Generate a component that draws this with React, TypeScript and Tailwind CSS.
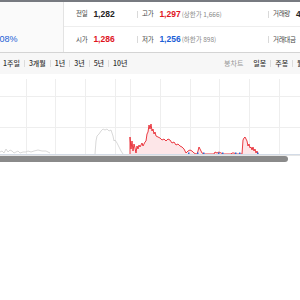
import React from 'react'

const KR = "font-['Noto_Sans_CJK_KR',sans-serif]"
const NUM = "font-['Liberation_Sans','Noto_Sans_CJK_KR',sans-serif]"

const grayLeft: [number, number][] = [
  [0, 151], [2, 150], [4, 152], [6, 148], [8, 151], [10, 149], [12, 150], [14, 152], [16, 151],
  [18, 150], [20, 152], [23, 151], [26, 151], [28, 150], [31, 151], [34, 150], [38, 149],
  [42, 150], [46, 150], [50, 152],
]

const grayMid: [number, number][] = [
  [95, 153], [96, 140], [97, 135], [99, 133], [101, 130], [103, 128], [105, 129], [107, 128],
  [109, 130], [111, 129], [113, 135], [114, 140], [115, 139], [117, 142], [119, 146], [121, 150], [123, 153],
]

const red: [number, number][] = [
  [130, 153], [130, 136], [131, 148], [132, 140], [133, 150], [134, 143], [135, 147], [136, 152],
  [137, 145], [138, 148], [139, 144], [140, 146], [142, 142], [143, 145], [145, 141], [146, 140],
  [147, 133], [148, 131], [149, 124], [150, 128], [151, 123], [152, 130], [153, 128], [154, 133],
  [155, 131], [156, 135], [158, 136], [160, 137], [162, 139], [164, 138], [166, 140], [168, 138],
  [170, 139], [172, 142], [174, 141], [176, 144], [178, 143], [180, 145], [182, 146], [184, 148],
  [186, 152], [188, 150], [190, 149], [192, 150], [194, 152], [196, 153], [197, 153], [198, 150],
  [199, 146], [200, 148], [202, 152], [204, 153], [214, 153], [215, 151], [217, 152], [219, 151],
  [221, 152], [223, 153], [231, 153], [232, 152], [234, 152], [236, 153], [242, 153], [243, 139],
  [244, 137], [245, 136], [246, 138], [247, 140], [248, 145], [249, 143], [250, 147], [251, 146],
  [252, 149], [253, 146], [254, 150], [255, 148], [256, 152], [257, 150], [258, 153],
]

const pts = (p: [number, number][]) => p.map(([x, y]) => `${x},${y}`).join(' ')

function InfoCell({ label, value, color, extra, first }: {
  label: string
  value: string
  color: string
  extra?: string
  first?: boolean
}) {
  return (
    <div className="flex items-center whitespace-nowrap">
      {!first && <span className="mr-[4px] h-[7px] w-px bg-[#d9d9d9]" />}
      <span className={`${KR} mr-[6px] text-[6.5px] tracking-[-0.3px] text-[#444]`}>{label}</span>
      <span className={`${NUM} text-[8.5px] font-bold ${color}`}>
        {value}
        {extra && <span className={`${KR} ml-[1px] text-[6.5px] font-normal text-[#888]`}>{extra}</span>}
      </span>
    </div>
  )
}

function Tab({ label, sep }: { label: string; sep?: boolean }) {
  return (
    <div className="flex items-center">
      {sep && <span className="mx-[4px] h-[7px] w-px bg-[#dcdcdc]" />}
      <span className={`${KR} text-[7px] font-medium text-[#333]`}>{label}</span>
    </div>
  )
}

export default function App() {
  return (
    <div className="relative h-[300px] w-[300px] overflow-hidden bg-white">
      <div className="h-[2px] bg-[#777a80]" />

      {/* price summary */}
      <div className="flex h-[51px] border-b border-[#d4d4d4]">
        <div className="flex w-[64px] shrink-0 items-center overflow-hidden border-r border-[#e3e3e3] bg-[#fafafa] pt-[25px]">
          <span className={`${NUM} -ml-[11px] text-[9px] text-[#1b5fd6]`}>-0.08%</span>
        </div>
        <div className="flex flex-1 flex-col">
          <div className="flex h-[25px] items-center border-b border-[#eeeeee]">
            <div className="w-[73px] pl-[12px]">
              <InfoCell first label="전일" value="1,282" color="text-[#222]" />
            </div>
            <div className="w-[131px]">
              <InfoCell label="고가" value="1,297" color="text-[#e0141e]" extra="(상한가 1,666)" />
            </div>
            <InfoCell label="거래량" value="4" color="text-[#222]" />
          </div>
          <div className="flex flex-1 items-center">
            <div className="w-[73px] pl-[12px]">
              <InfoCell first label="시가" value="1,286" color="text-[#e0141e]" />
            </div>
            <div className="w-[131px]">
              <InfoCell label="저가" value="1,256" color="text-[#1b5fd6]" extra="(하한가 898)" />
            </div>
            <InfoCell label="거래대금" value="" color="text-[#222]" />
          </div>
        </div>
      </div>

      {/* period tabs */}
      <div className="flex h-[21px] items-center justify-between bg-[#f7f7f7] pl-[3px]">
        <div className="flex items-center">
          <Tab label="1주일" />
          <Tab sep label="3개월" />
          <Tab sep label="1년" />
          <Tab sep label="3년" />
          <Tab sep label="5년" />
          <Tab sep label="10년" />
        </div>
        <div className="-mr-[10px] flex items-center">
          <span className={`${KR} mr-[10px] text-[7px] text-[#999]`}>봉차트</span>
          <Tab label="일봉" />
          <Tab sep label="주봉" />
          <Tab sep label="월봉" />
        </div>
      </div>

      {/* chart */}
      <svg width="300" height="81" viewBox="0 73 300 81" className="block">
        {[95.5, 126.5].map((y) => (
          <line key={y} x1="0" x2="300" y1={y} y2={y} stroke="#eeeeee" strokeWidth="1" />
        ))}
        {[26, 55, 85, 115, 130, 160, 190, 219, 249, 279].map((x) => (
          <line key={x} x1={x + 0.5} x2={x + 0.5} y1="78" y2="153" stroke="#eeeeee" strokeWidth="1" />
        ))}
        <polyline points={pts(grayLeft)} fill="none" stroke="#c9c9c9" strokeWidth="0.7" />
        <polyline points={pts(grayMid)} fill="none" stroke="#c9c9c9" strokeWidth="0.7" />
        <polygon points={pts(red)} fill="#fde6e8" />
        <polyline points={pts(red)} fill="none" stroke="#e8262f" strokeWidth="0.9" />
        {[188, 197, 203, 218, 222, 235, 239, 257].map((x) => (
          <rect key={x} x={x} y="151.5" width="1.5" height="1.5" fill="#2f6bd8" />
        ))}
        <line x1="0" x2="300" y1="153.5" y2="153.5" stroke="#d3dbe6" strokeWidth="1" />
      </svg>

      {/* scroll thumb */}
      <div className="h-px bg-[#e6e6e6]" />
      <div className="h-[6px] w-[288px] rounded-r-full bg-[#8a8a8a]" />
    </div>
  )
}
